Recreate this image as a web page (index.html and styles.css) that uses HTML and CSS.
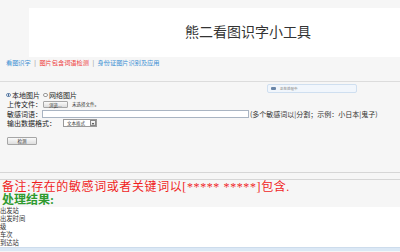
FILE: index.html
```html
<!DOCTYPE html>
<html lang="zh-CN">
<head>
<meta charset="utf-8">
<title>熊二看图识字小工具</title>
<link rel="stylesheet" href="styles.css">
</head>
<body>
<div class="header"><h1 class="title">熊二看图识字小工具</h1></div>
<div class="nav">
  <a class="link blue">看图识字</a><span class="sep">|</span><a class="link red">图片包含词语检测</a><span class="sep">|</span><a class="link blue">身份证图片识别及应用</a>
</div>
<div class="toast"><span class="toast-icon"></span><span class="toast-text">正在处理中</span></div>
<form class="form">
  <div class="row">
    <label class="radio"><input type="radio" name="src" checked>本地图片</label>
    <label class="radio"><input type="radio" name="src">网络图片</label>
  </div>
  <div class="row">
    <span class="label">上传文件：</span><span class="browse">浏览...</span><span class="nofile">未选择文件。</span>
  </div>
  <div class="row">
    <span class="label">敏感词语：</span><span class="text-input"></span><span class="hint">(多个敏感词以|分割；示例：小日本|鬼子)</span>
  </div>
  <div class="row">
    <span class="label">输出数据格式：</span><span class="select"><span class="select-text">文本格式</span><span class="select-arrow"></span></span>
  </div>
  <div class="btn-row"><span class="btn">检测</span></div>
</form>
<div class="rule first"></div>
<div class="rule second"></div>
<p class="note">备注:存在的敏感词或者关键词以[***** *****]包含.</p>
<p class="result-title">处理结果:</p>
<ul class="result">
  <li>出发站</li>
  <li>出发时间</li>
  <li>级</li>
  <li>车次</li>
  <li>到达站</li>
</ul>
<div class="footer-bar"></div>
</body>
</html>
```
FILE: styles.css
```css
* { box-sizing: border-box; }
html, body { margin: 0; padding: 0; }
body {
  background: #f6f6f6;
  font-family: "Noto Sans CJK SC", "Liberation Sans", sans-serif;
  color: #222;
  width: 400px;
  height: 252px;
  overflow: hidden;
  position: relative;
}
.header {
  margin: 8px 0 0 29px;
  height: 49px;
  background: #fff;
  display: flex;
  align-items: center;
  padding-left: 156px;
  padding-bottom: 3px;
}
.title {
  margin: 0;
  font-size: 14px;
  font-weight: normal;
  color: #333;
  line-height: 16px;
}
.nav {
  height: 25px;
  padding: 2px 0 0 6px;
  border-bottom: 1px solid #dcdcdc;
  font-size: 6.2px;
  line-height: 8px;
  display: flex;
}
.link { text-decoration: none; }
.blue { color: #3b8fd3; }
.red { color: #ee3b3b; }
.sep { color: #888; margin: 0 3.5px; }
.toast {
  position: absolute;
  left: 267px;
  top: 84px;
  width: 90px;
  height: 9px;
  background: #f1f6fc;
  border: 1px solid #cfdff0;
  border-radius: 2px;
  display: flex;
  align-items: center;
  padding-left: 3px;
  gap: 4px;
}
.toast-icon {
  width: 5px;
  height: 3px;
  background: #6a86a8;
  border-radius: 1px;
}
.toast-text {
  font-size: 3.5px;
  color: #777;
  line-height: 4px;
}
.form {
  margin: 0;
  padding: 8px 0 0 6px;
}
.row {
  height: 9.5px;
  display: flex;
  align-items: center;
  font-size: 7px;
  line-height: 8px;
  white-space: nowrap;
}
.radio {
  display: flex;
  align-items: center;
  margin-right: 3px;
}
.radio input {
  appearance: none;
  -webkit-appearance: none;
  width: 4.5px;
  height: 4.5px;
  margin: 0 1.5px 0 0;
  border: 0.7px solid #999;
  border-radius: 50%;
  background: #fff;
}
.radio input:checked {
  background: radial-gradient(circle, #4a6f9a 45%, #fff 55%);
  border-color: #6d8bb0;
}
.label { padding-left: 1px; }
.browse {
  margin-left: 1px;
  width: 25px;
  height: 7px;
  border: 0.7px solid #a6a6a6;
  border-radius: 1px;
  background: linear-gradient(#fafafa, #dedede);
  font-size: 4.5px;
  line-height: 6px;
  text-align: center;
  color: #333;
}
.nofile {
  margin-left: 4px;
  font-size: 4.5px;
  color: #333;
}
.text-input {
  width: 207px;
  height: 7.5px;
  background: #fff;
  border: 0.7px solid #a9b4c2;
}
.hint {
  margin-left: 1px;
  font-size: 7px;
  color: #333;
}
.select {
  margin-left: 7px;
  width: 34px;
  height: 8px;
  background: #fff;
  border: 0.7px solid #9a9a9a;
  display: flex;
  align-items: center;
}
.select-text {
  flex: 1;
  font-size: 4.5px;
  line-height: 6px;
  padding-left: 3px;
  color: #333;
}
.select-arrow {
  width: 6px;
  height: 6px;
  margin-right: 0.5px;
  border: 0.5px solid #888;
  background: linear-gradient(#fafafa, #ddd);
  position: relative;
}
.select-arrow::after {
  content: "";
  position: absolute;
  left: 1.3px;
  top: 2px;
  border-left: 1.5px solid transparent;
  border-right: 1.5px solid transparent;
  border-top: 2px solid #333;
}
.btn-row {
  padding: 9px 0 0 1px;
  height: 17px;
}
.btn {
  display: block;
  width: 30px;
  height: 8px;
  border: 0.7px solid #a6a6a6;
  border-radius: 1px;
  background: linear-gradient(#fafafa, #dedede);
  font-size: 4.5px;
  line-height: 7px;
  text-align: center;
  color: #333;
}
.rule {
  height: 1px;
  background: #d6d6d6;
}
.rule.first { margin-top: 27px; }
.rule.second { margin-top: 6px; }
.note {
  margin: 0;
  padding: 1px 0 0 2px;
  height: 14px;
  font-family: "Liberation Serif", "Noto Sans CJK SC", serif;
  font-size: 12px;
  line-height: 13px;
  letter-spacing: 0.6px;
  color: #f01e1e;
  white-space: nowrap;
}
.result-title {
  margin: 0;
  padding-left: 2px;
  height: 13px;
  font-family: "Liberation Serif", "Noto Sans CJK SC", serif;
  font-size: 12px;
  line-height: 13px;
  font-weight: bold;
  color: #2f9a2f;
}
.result {
  list-style: none;
  margin: 0;
  padding: 0;
  background: #fff;
  height: 40px;
  font-size: 6.3px;
  line-height: 8px;
  color: #333;
}
.footer-bar {
  height: 4px;
  background: #dbe8f5;
  border-top: 1px solid #cddcec;
}
```
